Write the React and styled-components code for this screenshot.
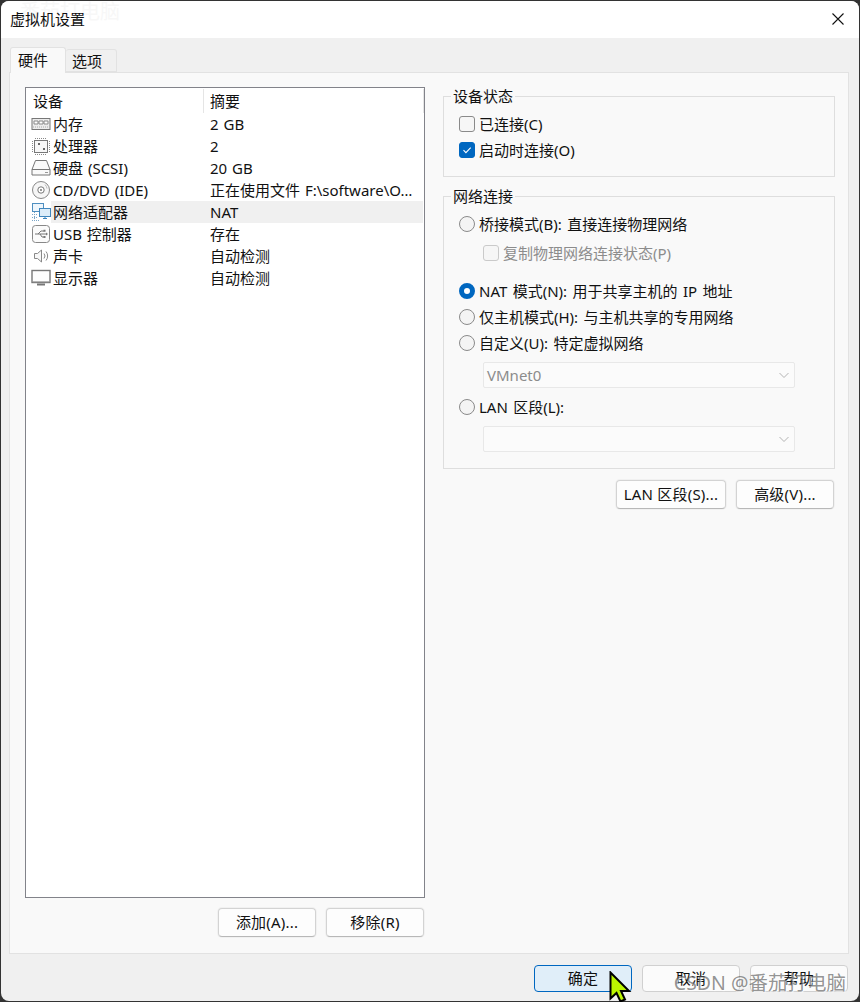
import React from "react";
import styled, { createGlobalStyle } from "styled-components";

const GlobalStyle = createGlobalStyle`
  html, body {
    margin: 0;
    padding: 0;
    background: #3a3a3a;
  }
  * {
    box-sizing: border-box;
  }
`;

const Shell = styled.div`
  position: relative;
  width: 860px;
  height: 1002px;
  padding: 1px;
  overflow: hidden;
  background: #333;
  font-family: "Noto Sans", "Noto Sans CJK SC", sans-serif;
  font-size: 15px;
  color: #111;
`;

const Dialog = styled.div`
  height: 1000px;
  display: flex;
  flex-direction: column;
  border-radius: 8px;
  overflow: hidden;
  background: #f0f0f0;
`;

const TitleBar = styled.div`
  height: 37px;
  flex: none;
  display: flex;
  align-items: center;
  justify-content: space-between;
  padding: 0 15px 1px 9px;
  background: #fff;
`;

const Title = styled.span`
  position: relative;
  z-index: 1;
  line-height: 20px;
`;

const Body = styled.div`
  flex: 1;
  display: flex;
  flex-direction: column;
  padding: 9px 10px 0 8px;
`;

const Tabs = styled.div`
  height: 25px;
  flex: none;
  display: flex;
  align-items: flex-end;
  padding-left: 1px;
`;

const Tab = styled.div`
  position: relative;
  z-index: 1;
  display: flex;
  align-items: center;
  width: ${(props) => (props.$active ? "56px" : "51px")};
  height: ${(props) => (props.$active ? "26px" : "23px")};
  margin-bottom: ${(props) => (props.$active ? "-1px" : "0")};
  padding: 0 0 ${(props) => (props.$active ? "2px" : "0")} ${(props) => (props.$active ? "7px" : "6px")};
  border: 1px solid #e2e2e2;
  border-bottom: ${(props) => (props.$active ? "none" : "1px solid #e2e2e2")};
  border-left: ${(props) => (props.$active ? "1px solid #e2e2e2" : "none")};
  border-radius: 3px 3px 0 0;
  background: ${(props) => (props.$active ? "#f9f9f9" : "#f0f0f0")};
  line-height: 20px;
`;

const Panel = styled.div`
  height: 882px;
  flex: none;
  display: flex;
  gap: 18px;
  padding: 14px 13px 0 15px;
  border: 1px solid #e2e2e2;
  background: #f9f9f9;
`;

const LeftColumn = styled.div`
  width: 400px;
  flex: none;
  display: flex;
  flex-direction: column;
`;

const RightColumn = styled.div`
  width: 392px;
  flex: none;
  display: flex;
  flex-direction: column;
`;

const DeviceList = styled.div`
  height: 811px;
  flex: none;
  border: 1px solid #82838a;
  background: #fff;
`;

const ListHeader = styled.div`
  height: 25px;
  display: flex;
  padding-top: 1px;
`;

const HeaderCell = styled.div`
  width: ${(props) => props.$width};
  height: 24px;
  padding-left: ${(props) => props.$indent};
  border-right: 1px solid #e5e5e5;
  line-height: 24px;
`;

const Row = styled.div`
  height: 22px;
  display: flex;
  align-items: center;
`;

const IconCell = styled.div`
  width: 25px;
  flex: none;
  display: flex;
  padding-left: 5px;
`;

const RowBody = styled.div`
  flex: 1;
  height: 22px;
  margin-right: 1px;
  display: flex;
  padding-left: 2px;
  line-height: 22px;
  word-spacing: 1px;
  background: ${(props) => (props.$selected ? "#f0f0f0" : "transparent")};
`;

const RowName = styled.span`
  width: 157px;
  flex: none;
`;

const RowValue = styled.span`
  white-space: nowrap;
`;

const ButtonRow = styled.div`
  display: flex;
  justify-content: flex-end;
  gap: 10px;
  margin-top: ${(props) => props.$top || "0"};
  padding-right: ${(props) => props.$right || "0"};
`;

const Button = styled.button`
  width: ${(props) => props.$width || "98px"};
  height: ${(props) => props.$height || "29px"};
  padding: 0 0 2px;
  border: 1px solid #d3d3d3;
  border-bottom-color: #b8b8b8;
  border-radius: 4px;
  background: #fdfdfd;
  box-shadow: 0 0 0 1px #f1f1f1;
  color: #111;
  font: inherit;
  line-height: 20px;
  letter-spacing: 0.2px;
  white-space: nowrap;
`;

const DefaultButton = styled(Button)`
  border: 1px solid #0067c0;
  background: #e0eef9;
  box-shadow: none;
`;

const FooterButton = styled(Button)`
  box-shadow: none;
  background: #fbfbfb;
  border-color: #d0d0d0;
`;

const Group = styled.fieldset`
  margin: ${(props) => props.$top || "0"} 0 0;
  padding: 6px 0 ${(props) => props.$bottom} 15px;
  min-width: 0;
  border: 1px solid #dedede;
`;

const Legend = styled.legend`
  height: 18px;
  margin-left: -8px;
  padding: 0 2px;
  line-height: 18px;
`;

const Option = styled.div`
  height: 26px;
  display: flex;
  align-items: center;
  gap: 4px;
  margin-top: ${(props) => props.$top || "0"};
  padding-left: ${(props) => props.$indent || "0"};
  line-height: 20px;
  word-spacing: 1.5px;
  white-space: nowrap;
  color: ${(props) => (props.$disabled ? "#8c8c8c" : "#111")};
`;

const CheckBox = styled.span`
  width: 16px;
  height: 16px;
  flex: none;
  display: flex;
  align-items: center;
  justify-content: center;
  border: 1px solid ${(props) => (props.$checked ? "#0067c0" : props.$disabled ? "#cacaca" : "#8a8a8a")};
  border-radius: 3px;
  background: ${(props) => (props.$checked ? "#0067c0" : "#f6f6f6")};
`;

const Radio = styled.span`
  width: 16px;
  height: 16px;
  flex: none;
  border-radius: 50%;
  border: ${(props) => (props.$checked ? "5px solid #0067c0" : "1px solid #8a8a8a")};
  background: ${(props) => (props.$checked ? "#fff" : "#f4f4f4")};
`;

const Select = styled.div`
  width: 312px;
  height: 26px;
  display: flex;
  align-items: center;
  justify-content: space-between;
  margin: 6px 0 0 24px;
  padding: 0 4px 0 3px;
  border: 1px solid #e8e8e8;
  border-radius: 2px;
  background: #fbfbfb;
  color: #8c8c8c;
  line-height: 20px;
`;

const Footer = styled(ButtonRow)`
  margin-top: 11px;
  padding-right: 1px;
`;

const Watermark = styled.div`
  position: absolute;
  right: 14px;
  bottom: 7px;
  color: rgba(80, 80, 80, 0.62);
  font-size: 19.5px;
  line-height: 24px;
  white-space: nowrap;
  text-shadow: 1px 1px 1px rgba(255, 255, 255, 0.7);
  pointer-events: none;
`;

const FaintMark = styled.div`
  position: absolute;
  left: 20px;
  top: 0;
  color: #f7f7f7;
  font-size: 20px;
  line-height: 24px;
`;

const Cursor = styled.svg`
  position: absolute;
  left: 609px;
  top: 971px;
`;

const CloseIcon = () => (
  <svg width="12" height="12" viewBox="0 0 12 12">
    <path d="M.5.5l11 11M11.5.5l-11 11" stroke="#111" strokeWidth="1.1" fill="none" />
  </svg>
);

const TickIcon = () => (
  <svg width="10" height="10" viewBox="0 0 10 10">
    <path d="M1.5 5.2l2.4 2.4 4.8-5" stroke="#fff" strokeWidth="1.1" fill="none" />
  </svg>
);

const ChevronIcon = () => (
  <svg width="12" height="8" viewBox="0 0 12 8">
    <path d="M1.5 2l4.5 4.5L10.5 2" stroke="#b4b4b4" strokeWidth="1" fill="none" />
  </svg>
);

const Glyph = ({ children }) => (
  <svg width="20" height="20" viewBox="0 0 20 20" fill="none">
    {children}
  </svg>
);

const MemoryIcon = () => (
  <Glyph>
    <rect x="1" y="4.5" width="18" height="11" fill="#ececec" stroke="#777" />
    <path d="M3 7h4v3H3zM8 7h4v3H8zM13 7h4v3h-4z" fill="#fff" stroke="#8a8a8a" />
    <path d="M2 13h16" stroke="#aaa" strokeDasharray="1 1" />
  </Glyph>
);

const CpuIcon = () => (
  <Glyph>
    <rect x="3.5" y="4.5" width="13" height="12" fill="#f7f7f7" stroke="#777" />
    <path d="M4 2.5h12M4 18.5h12M1.5 5v11M18.5 5v11" stroke="#888" strokeDasharray="1 1" />
    <path d="M7 7h2v2H7zM12 12h2v2h-2z" fill="#666" />
  </Glyph>
);

const DiskIcon = () => (
  <Glyph>
    <path d="M4.5 2.5h11l3.5 9v5.5H1v-5.5z" fill="#fafafa" stroke="#777" />
    <path d="M1 11.5h18" stroke="#777" />
    <path d="M14 14.5h3" stroke="#999" />
  </Glyph>
);

const DiscIcon = () => (
  <Glyph>
    <circle cx="10" cy="10" r="8.5" fill="#f6f6f6" stroke="#888" />
    <circle cx="10" cy="10" r="3.2" fill="#fff" stroke="#777" />
    <circle cx="10" cy="10" r="1" fill="#777" />
    <path d="M14 4.6a6.5 6.5 0 0 1 2 4" stroke="#bbb" />
  </Glyph>
);

const NetworkIcon = () => (
  <Glyph>
    <rect x="1.5" y="1.5" width="11" height="8" fill="#eef6fc" stroke="#4f8fc0" />
    <rect x="8.5" y="6.5" width="11" height="8" fill="#dcedf9" stroke="#3f86bd" />
    <path d="M12 16.5h4M14 14.5v2" stroke="#3f86bd" />
    <path d="M1 12.5h5M1 15.5h5M1 18.5h8M3.5 10v8" stroke="#7aa6c8" strokeDasharray="1 1" />
  </Glyph>
);

const UsbIcon = () => (
  <Glyph>
    <rect x="1.5" y="1.5" width="17" height="17" rx="3" fill="#fbfbfb" stroke="#888" />
    <path d="M4 10h11M7 10l3-3h3M9 10l2 3h2" stroke="#777" />
    <path d="M15 8.5l2 1.5-2 1.5z" fill="#777" />
    <path d="M12.5 5.8h2v2h-2zM12.5 12h2v2h-2z" fill="#777" />
  </Glyph>
);

const SpeakerIcon = () => (
  <Glyph>
    <path d="M3.5 7.5h3l4-3.5v12l-4-3.5h-3z" fill="#f7f7f7" stroke="#888" />
    <path d="M13 7.5a4 4 0 0 1 0 5M15 5.5a7 7 0 0 1 0 9" stroke="#888" />
  </Glyph>
);

const DisplayIcon = () => (
  <Glyph>
    <rect x="1" y="2.5" width="18" height="12" fill="#fdfdfd" stroke="#777" strokeWidth="1.4" />
    <path d="M6 16.5h8" stroke="#777" strokeWidth="2" />
    <path d="M2 13.7h16" stroke="#aaa" />
  </Glyph>
);

const devices = [
  { icon: <MemoryIcon />, name: "内存", value: "2 GB" },
  { icon: <CpuIcon />, name: "处理器", value: "2" },
  { icon: <DiskIcon />, name: "硬盘 (SCSI)", value: "20 GB" },
  { icon: <DiscIcon />, name: "CD/DVD (IDE)", value: "正在使用文件 F:\\software\\O…" },
  { icon: <NetworkIcon />, name: "网络适配器", value: "NAT", selected: true },
  { icon: <UsbIcon />, name: "USB 控制器", value: "存在" },
  { icon: <SpeakerIcon />, name: "声卡", value: "自动检测" },
  { icon: <DisplayIcon />, name: "显示器", value: "自动检测" },
];

const App = () => {
  return (
    <Shell>
      <GlobalStyle />
      <FaintMark>番茄打电脑</FaintMark>
      <Dialog>
        <TitleBar>
          <Title>虚拟机设置</Title>
          <CloseIcon />
        </TitleBar>
        <Body>
          <Tabs>
            <Tab $active>硬件</Tab>
            <Tab>选项</Tab>
          </Tabs>
          <Panel>
            <LeftColumn>
              <DeviceList>
                <ListHeader>
                  <HeaderCell $width="178px" $indent="7px">设备</HeaderCell>
                  <HeaderCell $width="220px" $indent="6px">摘要</HeaderCell>
                </ListHeader>
                {devices.map((device) => (
                  <Row key={device.name}>
                    <IconCell>{device.icon}</IconCell>
                    <RowBody $selected={device.selected}>
                      <RowName>{device.name}</RowName>
                      <RowValue>{device.value}</RowValue>
                    </RowBody>
                  </Row>
                ))}
              </DeviceList>
              <ButtonRow $top="10px" $right="1px">
                <Button>添加(A)...</Button>
                <Button>移除(R)</Button>
              </ButtonRow>
            </LeftColumn>
            <RightColumn>
              <Group $bottom="13px">
                <Legend>设备状态</Legend>
                <Option>
                  <CheckBox />
                  已连接(C)
                </Option>
                <Option>
                  <CheckBox $checked>
                    <TickIcon />
                  </CheckBox>
                  启动时连接(O)
                </Option>
              </Group>
              <Group $top="10px" $bottom="16px">
                <Legend>网络连接</Legend>
                <Option>
                  <Radio />
                  桥接模式(B): 直接连接物理网络
                </Option>
                <Option $top="3px" $indent="24px" $disabled>
                  <CheckBox $disabled />
                  复制物理网络连接状态(P)
                </Option>
                <Option $top="12px">
                  <Radio $checked />
                  NAT 模式(N): 用于共享主机的 IP 地址
                </Option>
                <Option>
                  <Radio />
                  仅主机模式(H): 与主机共享的专用网络
                </Option>
                <Option>
                  <Radio />
                  自定义(U): 特定虚拟网络
                </Option>
                <Select>
                  VMnet0
                  <ChevronIcon />
                </Select>
                <Option $top="6px">
                  <Radio />
                  LAN 区段(L):
                </Option>
                <Select>
                  <span />
                  <ChevronIcon />
                </Select>
              </Group>
              <ButtonRow $top="11px" $right="1px">
                <Button $width="110px">LAN 区段(S)...</Button>
                <Button>高级(V)...</Button>
              </ButtonRow>
            </RightColumn>
          </Panel>
          <Footer>
            <DefaultButton $height="27px">确定</DefaultButton>
            <FooterButton $height="27px">取消</FooterButton>
            <FooterButton $height="27px">帮助</FooterButton>
          </Footer>
        </Body>
      </Dialog>
      <Watermark>CSDN @番茄打电脑</Watermark>
      <Cursor width="24" height="32" viewBox="0 0 24 32">
        <path
          d="M1.5 1.5v26l6-5.5 4 8.5 4.5-2-4-8.5h8z"
          fill="#bcf500"
          stroke="#000"
          strokeWidth="2"
          strokeLinejoin="miter"
        />
      </Cursor>
    </Shell>
  );
};

export default App;
